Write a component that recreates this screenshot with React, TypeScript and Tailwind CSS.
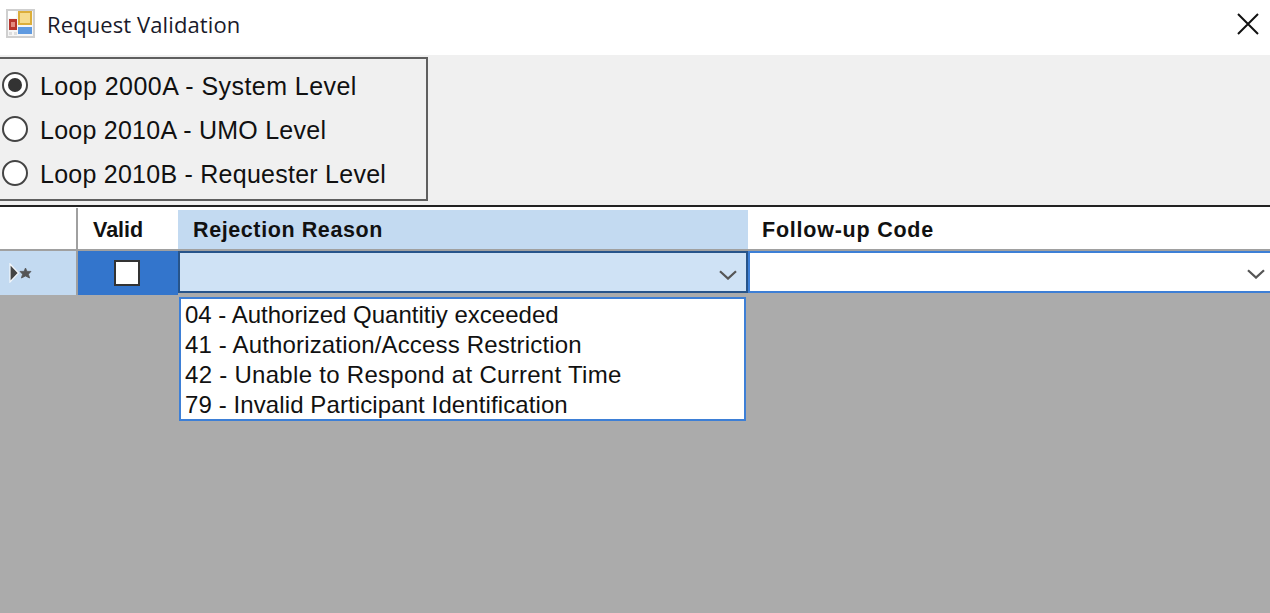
import React from "react";

function Radio({ checked, label, tracking }: { checked?: boolean; label: string; tracking: string }) {
  return (
    <div className="flex h-[44px] items-center">
      <span className="flex h-[26px] w-[26px] shrink-0 items-center justify-center rounded-full border-2 border-[#444] bg-white">
        {checked && <span className="h-[14px] w-[14px] rounded-full bg-[#333]" />}
      </span>
      <span className={`ml-[12px] mt-[3px] whitespace-nowrap text-[25px] leading-none text-[#111] ${tracking}`}>{label}</span>
    </div>
  );
}

function Chevron() {
  return (
    <svg width="18" height="10" viewBox="0 0 18 10" fill="none" stroke="#555" strokeWidth="2.2">
      <path d="M1 1.2 L9 8.6 L17 1.2" />
    </svg>
  );
}

export default function App() {
  const options = [
    { text: "04 - Authorized Quantitiy exceeded", cls: "tracking-[0px]" },
    { text: "41 - Authorization/Access Restriction", cls: "tracking-[0.16px]" },
    { text: "42 - Unable to Respond at Current Time", cls: "tracking-[0.29px]" },
    { text: "79 - Invalid Participant Identification", cls: "tracking-[0.1px]" },
  ];
  return (
    <div className="flex h-[613px] w-[1270px] flex-col overflow-hidden bg-[#ababab] font-['Liberation_Sans',sans-serif]">
      {/* Title bar */}
      <div className="flex h-[55px] shrink-0 items-center bg-white pb-[8px] pl-[6px] pr-[11px]">
        <svg width="29" height="29" viewBox="0 0 29 29" className="shrink-0">
          <rect x="0" y="0" width="29" height="29" fill="#cfcfcf" />
          <rect x="2" y="2" width="25" height="25" fill="#f6f6f6" />
          <rect x="2" y="2" width="8" height="7" fill="#ffffff" />
          <rect x="12" y="2" width="14" height="14" fill="#dcae3a" />
          <rect x="14" y="4" width="10" height="10" fill="#f6dc8e" />
          <rect x="3" y="10" width="8" height="11" fill="#b8342c" />
          <rect x="5" y="13" width="4" height="5" fill="#e28a80" />
          <rect x="12" y="18" width="14" height="7" fill="#5f9ae0" />
          <rect x="3" y="23" width="3" height="3" fill="#dddddd" />
          <rect x="8" y="23" width="3" height="3" fill="#dddddd" />
        </svg>
        <span className="ml-[12px] font-['Open_Sans',sans-serif] text-[22px] leading-none tracking-[0.1px] text-[#1a1a2a]">Request Validation</span>
        <svg width="22" height="22" viewBox="0 0 22 22" className="ml-auto" stroke="#111" strokeWidth="2" fill="none">
          <path d="M1 1 L21 21 M21 1 L1 21" />
        </svg>
      </div>

      {/* Radio panel */}
      <div className="h-[150px] shrink-0 bg-[#f0f0f0] pt-[2px]">
        <div className="flex h-[144px] w-[428px] flex-col justify-center border-2 border-l-0 border-[#5f5f5f] pb-[1px] pl-[2px]">
          <Radio checked label="Loop 2000A - System Level" tracking="tracking-[0.44px]" />
          <Radio label="Loop 2010A - UMO Level" tracking="tracking-[0.25px]" />
          <Radio label="Loop 2010B - Requester Level" tracking="tracking-[0.25px]" />
        </div>
      </div>

      {/* Grid */}
      <div className="h-[3px] shrink-0 border-t-2 border-[#222] bg-white" />
      <div className="flex h-[43px] shrink-0 border-b-2 border-[#a0a0a0] bg-white text-[21.5px] font-bold leading-none text-[#111]">
        <div className="w-[78px] shrink-0 border-r-2 border-[#a0a0a0]" />
        <div className="flex w-[100px] shrink-0 items-center pl-[15px] pt-[4px]">Valid</div>
        <div className="mt-[2px] flex w-[570px] shrink-0 items-center bg-[#c3daf1] pl-[15px] pt-[2px] tracking-[0.6px]">Rejection Reason</div>
        <div className="flex flex-1 items-center pl-[14px] pt-[4px] tracking-[0.77px]">Follow-up Code</div>
      </div>
      <div className="relative flex h-[44px] shrink-0">
        <div className="flex w-[78px] shrink-0 items-center border-r-2 border-[#a0a0a0] bg-[#c3daf1] pl-[9px]">
          <svg width="24" height="20" viewBox="0 0 24 20">
            <path d="M1 1 L9.5 10 L1 19 Z" fill="#444" stroke="#f4f8fc" strokeWidth="1.2" />
            <path d="M16.5 5 L18 8.4 L22 8.4 L19.4 11.2 L20.6 15 L16.5 13 L12.4 15 L13.6 11.2 L11 8.4 L15 8.4 Z" fill="#555" stroke="#555" strokeWidth="0.8" />
          </svg>
        </div>
        <div className="flex w-[100px] shrink-0 items-center justify-center bg-[#3375cc] pr-[2px]">
          <span className="h-[26px] w-[26px] border-2 border-[#333] bg-white" />
        </div>
        <div className="mb-[2px] flex w-[570px] shrink-0 items-center justify-end border-2 border-[#27548a] bg-[#cfe2f5] pr-[9px] pt-[5px]">
          <Chevron />
        </div>
        <div className="mb-[2px] flex flex-1 items-center justify-end border-2 border-r-0 border-[#3d7fd6] bg-white pr-[5px] pt-[3px]">
          <Chevron />
        </div>
        {/* Dropdown list */}
        <div className="absolute left-[179px] top-[46px] h-[124px] w-[567px] border-2 border-[#3d7fd6] bg-white pl-[4px]">
          {options.map((o) => (
            <div key={o.text} className={`flex h-[30px] items-center whitespace-nowrap pt-[1px] text-[24px] leading-none text-[#111] ${o.cls}`}>{o.text}</div>
          ))}
        </div>
      </div>
    </div>
  );
}
